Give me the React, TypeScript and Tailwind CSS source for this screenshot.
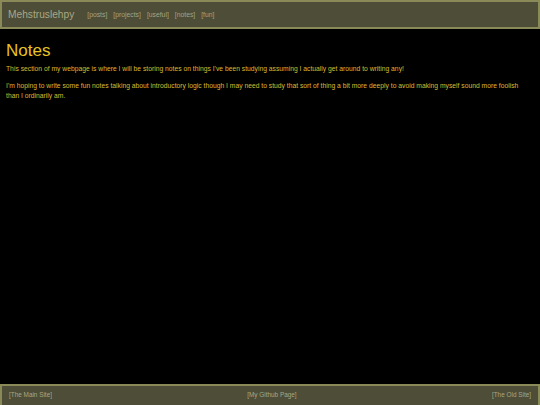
import React from 'react';

const navLinks = ['posts', 'projects', 'useful', 'notes', 'fun'];

export default function App() {
  return (
    <div
      className="h-screen flex flex-col bg-black overflow-hidden"
      style={{ fontFamily: '"Liberation Sans", Arial, sans-serif' }}
    >
      <header className="h-[29px] shrink-0 flex items-center border-2 border-[#8a8a58] bg-[#4d4d38] pl-[6px] pt-[1px]">
        <span className="text-[10.2px] text-[#a8a885] leading-none">Mehstruslehpy</span>
        <nav className="flex gap-[6px] ml-[13px]">
          {navLinks.map((l) => (
            <a key={l} className="text-[6.8px] text-[#a3a382] leading-none">
              [{l}]
            </a>
          ))}
        </nav>
      </header>

      <main className="flex-1 px-[6px] pt-[12px]">
        <h1 className="text-[17px] leading-[20px] text-[#e8c224] mb-[3px]">Notes</h1>
        <p className="text-[6.75px] leading-[10px] text-[#dcbb30] mb-[7px]">
          This section of my webpage is where I will be storing notes on things I've been studying assuming I
          actually get around to writing any!
        </p>
        <p className="text-[6.75px] leading-[10px] text-[#dcbb30] max-w-[526px]">
          I'm hoping to write some fun notes talking about introductory logic though I may need to study that sort of
          thing a bit more deeply to avoid making myself sound more foolish than I ordinarily am.
        </p>
      </main>

      <footer className="h-[21px] shrink-0 flex items-center justify-between border-t-2 border-x-2 border-[#8a8a58] bg-[#4d4d38] pl-[7px] pr-[7px]">
        <a className="text-[6.4px] text-[#a8a885] leading-none">[The Main Site]</a>
        <a className="text-[6.4px] text-[#a8a885] leading-none">[My Github Page]</a>
        <a className="text-[6.4px] text-[#a8a885] leading-none">[The Old Site]</a>
      </footer>
    </div>
  );
}
